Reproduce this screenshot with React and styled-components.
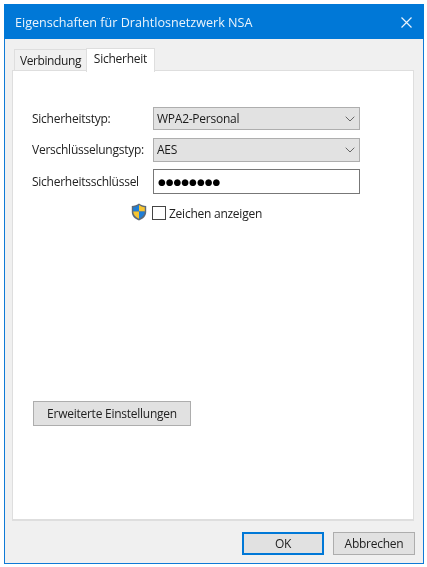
import React from "react";
import styled, { createGlobalStyle } from "styled-components";

const Global = createGlobalStyle`
  html, body { margin: 0; padding: 0; background: #fff; }
  body { width: 427px; height: 567px; overflow: hidden; font-family: "Open Sans", "Noto Sans", sans-serif; }
`;
const Page = styled.div`
  padding: 4px 3px 3px 4px;
  filter: blur(0.35px);
`;
const Win = styled.div`
  width: 420px;
  height: 560px;
  box-sizing: border-box;
  border: 1px solid #0f7ad6;
  border-top: 0;
  background: #f0f0f0;
  display: flex;
  flex-direction: column;
`;
const TitleBar = styled.div`
  height: 34px;
  flex: none;
  margin: 0 -1px;
  background: #0078d7;
  color: #eaf4fc;
  display: flex;
  align-items: center;
  justify-content: space-between;
  padding: 1px 12px 0 11px;
  font-size: 12.6px;
`;
const Body = styled.div`
  flex: 1;
  display: flex;
  flex-direction: column;
  padding: 9px 8px 0 7px;
`;
const Tabs = styled.div`
  display: flex;
  align-items: flex-end;
  height: 23px;
  padding-left: 2px;
  position: relative;
  z-index: 1;
  margin-bottom: -1px;
`;
const Tab = styled.div`
  box-sizing: border-box;
  height: ${(p) => (p.$active ? "24px" : "22px")};
  width: ${(p) => (p.$active ? "69px" : "72px")};
  margin-bottom: ${(p) => (p.$active ? "-1px" : "0")};
  background: ${(p) => (p.$active ? "#fff" : "#f0f0f0")};
  border: 1px solid #dedede;
  border-bottom: ${(p) => (p.$active ? "0" : "1px solid #dedede")};
  border-right: ${(p) => (p.$active ? "1px solid #dedede" : "0")};
  font-size: 12px;
  letter-spacing: ${(p) => (p.$active ? "-0.25px" : "-0.4px")};
  color: #222;
  text-align: center;
  line-height: ${(p) => (p.$active ? "20px" : "21px")};
`;
const Panel = styled.div`
  box-sizing: border-box;
  width: 402px;
  height: 451px;
  background: #fff;
  border: 1px solid #dedede;
  border-bottom-width: 2px;
  display: flex;
  flex-direction: column;
  padding: 36px 0 0 19px;
`;
const FormGrid = styled.div`
  display: grid;
  grid-template-columns: 121px 207px;
  grid-template-rows: 23px 24px 25px;
  row-gap: 7.5px;
  align-items: center;
`;
const Label = styled.div`
  font-size: 12px;
  letter-spacing: -0.25px;
  color: #222;
  white-space: nowrap;
`;
const Select = styled.div`
  box-sizing: border-box;
  height: 100%;
  border: 1px solid #aeaeae;
  background: #e2e2e2;
  display: flex;
  align-items: center;
  justify-content: space-between;
  padding: 0 4px 0 3px;
  font-size: 12px;
  letter-spacing: -0.25px;
  color: #1a1a1a;
`;
const Input = styled.div`
  box-sizing: border-box;
  height: 100%;
  border: 1px solid #777;
  background: #fff;
  display: flex;
  align-items: center;
  padding: 0 0 0 4px;
  font-family: "DejaVu Sans", sans-serif;
  font-size: 8.8px;
  letter-spacing: 0.1px;
  color: #000;
`;
const ShowRow = styled.div`
  display: flex;
  align-items: center;
  margin: 9px 0 0 99px;
  height: 18px;
`;
const Check = styled.div`
  box-sizing: border-box;
  width: 14px;
  height: 14px;
  margin: 2px 3px 0 5px;
  background: #fff;
  border: 1px solid #444;
`;
const CheckText = styled.span`
  font-size: 12px;
  letter-spacing: -0.25px;
  color: #222;
  margin-top: 2px;
`;
const Btn = styled.div`
  box-sizing: border-box;
  background: #e1e1e1;
  border: ${(p) => (p.$default ? "2px solid #0078d7" : "1px solid #adadad")};
  display: flex;
  align-items: center;
  justify-content: center;
  font-size: 12px;
  letter-spacing: -0.25px;
  color: #222;
  width: ${(p) => p.$w}px;
  height: ${(p) => p.$h}px;
  margin-left: ${(p) => p.$indent || 0}px;
`;
const Spacer = styled.div`
  height: 180px;
  flex: none;
`;
const Footer = styled.div`
  display: flex;
  justify-content: flex-end;
  gap: 9px;
  padding: 11px 0 0 0;
`;

const Chevron = () => (
  <svg width="10" height="6" viewBox="0 0 10 6" fill="none">
    <path d="M.7.700l4.300 4.300 4.300-4.300" stroke="#666" strokeWidth="1" />
  </svg>
);
const CloseX = () => (
  <svg width="11" height="11" viewBox="0 0 11 11" fill="none">
    <path d="M.5.500l10 10M10.500.500l-10 10" stroke="#eaf4fc" strokeWidth="1.200" />
  </svg>
);
const Shield = () => (
  <svg width="16" height="18" viewBox="0 0 16 18">
    <path d="M8 .5C6 2 3.500 2.800.8 3v6c0 4 3 7 7.200 8.500 4.200-1.500 7.200-4.500 7.200-8.500V3C12.500 2.800 10 2 8 .5z" fill="#5d6a78" />
    <path d="M8 2v6.500H2.200V4.200C4.500 4 6.400 3.200 8 2z" fill="#1f7ed6" />
    <path d="M8 2c1.600 1.200 3.500 2 5.800 2.200v4.300H8z" fill="#f7c531" />
    <path d="M2.200 8.500H8V15.800C4.800 14.500 2.400 12 2.200 8.500z" fill="#f7c531" />
    <path d="M8 8.500h5.800c-.2 3.500-2.600 6-5.800 7.300z" fill="#1f7ed6" />
  </svg>
);

export default function App() {
  return (
    <Page>
      <Global />
      <Win>
        <TitleBar>
          <span>Eigenschaften für Drahtlosnetzwerk NSA</span>
          <CloseX />
        </TitleBar>
        <Body>
          <Tabs>
            <Tab>Verbindung</Tab>
            <Tab $active>Sicherheit</Tab>
          </Tabs>
          <Panel>
            <FormGrid>
              <Label>Sicherheitstyp:</Label>
              <Select>WPA2-Personal<Chevron /></Select>
              <Label>Verschlüsselungstyp:</Label>
              <Select>AES<Chevron /></Select>
              <Label>Sicherheitsschlüssel</Label>
              <Input>●●●●●●●●</Input>
            </FormGrid>
            <ShowRow>
              <Shield />
              <Check />
              <CheckText>Zeichen anzeigen</CheckText>
            </ShowRow>
            <Spacer />
            <Btn $indent={1} $w={158} $h={25}>Erweiterte Einstellungen</Btn>
          </Panel>
          <Footer>
            <Btn $default $w={82} $h={23}>OK</Btn>
            <Btn $w={82} $h={23}>Abbrechen</Btn>
          </Footer>
        </Body>
      </Win>
    </Page>
  );
}
